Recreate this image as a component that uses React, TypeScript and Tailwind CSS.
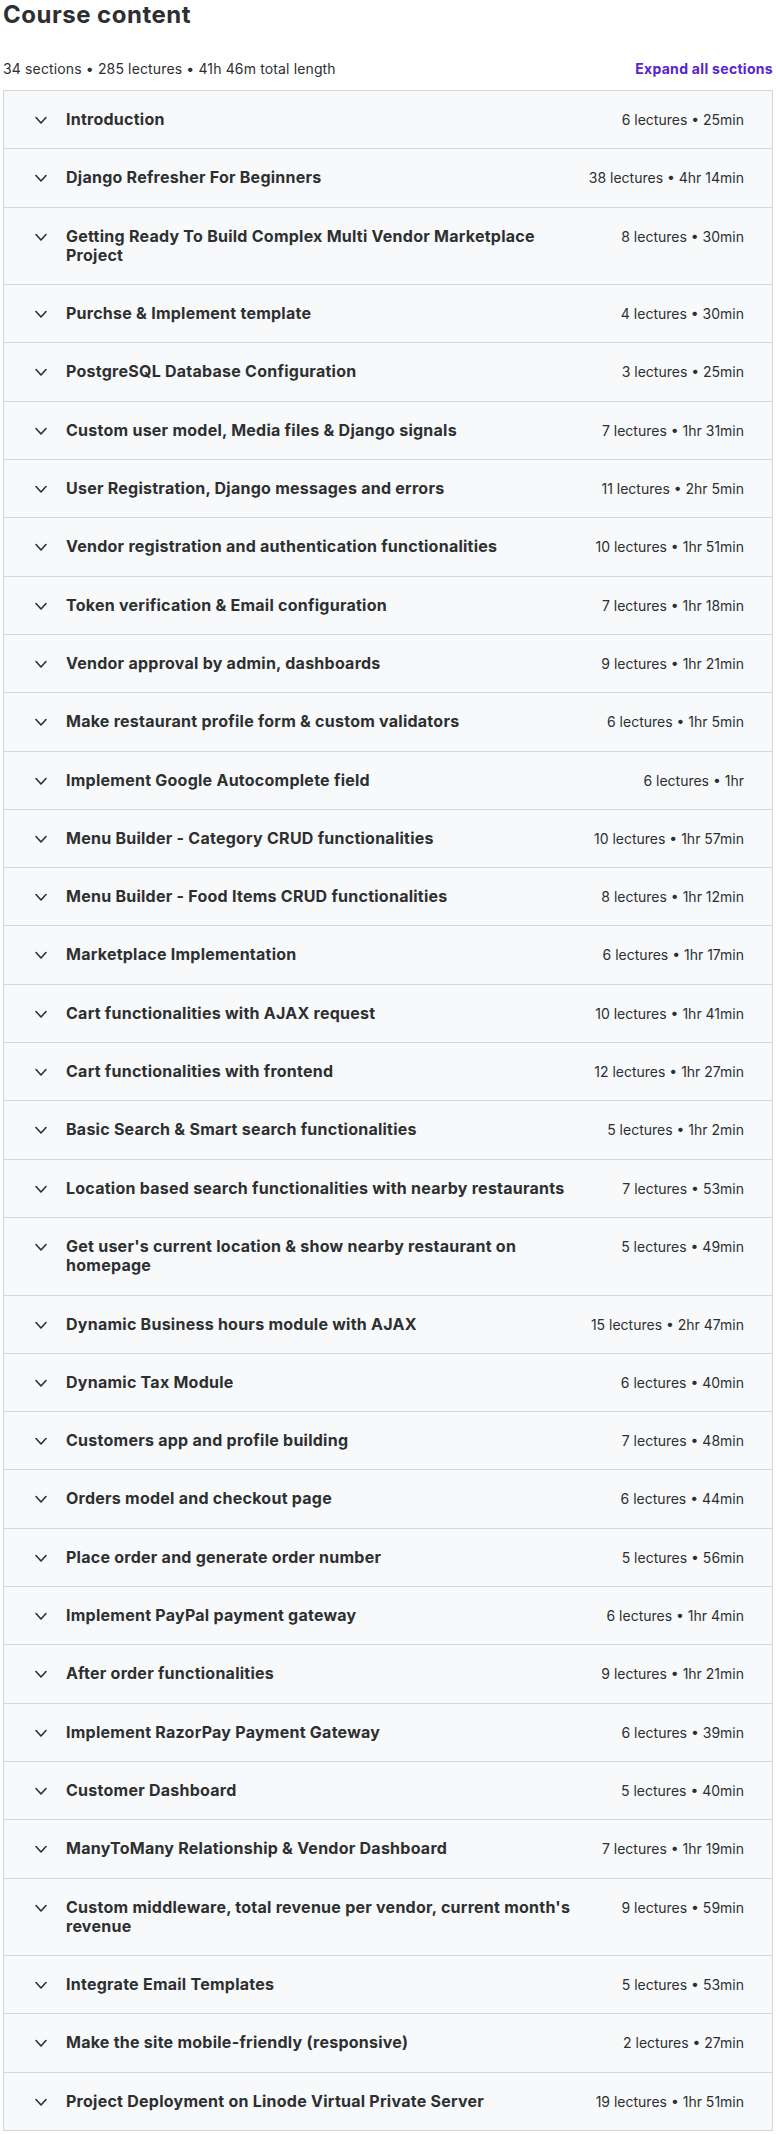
const sections: [string, string][] = [
  ['Introduction', '6 lectures • 25min'],
  ['Django Refresher For Beginners', '38 lectures • 4hr 14min'],
  ['Getting Ready To Build Complex Multi Vendor Marketplace Project', '8 lectures • 30min'],
  ['Purchse & Implement template', '4 lectures • 30min'],
  ['PostgreSQL Database Configuration', '3 lectures • 25min'],
  ['Custom user model, Media files & Django signals', '7 lectures • 1hr 31min'],
  ['User Registration, Django messages and errors', '11 lectures • 2hr 5min'],
  ['Vendor registration and authentication functionalities', '10 lectures • 1hr 51min'],
  ['Token verification & Email configuration', '7 lectures • 1hr 18min'],
  ['Vendor approval by admin, dashboards', '9 lectures • 1hr 21min'],
  ['Make restaurant profile form & custom validators', '6 lectures • 1hr 5min'],
  ['Implement Google Autocomplete field', '6 lectures • 1hr'],
  ['Menu Builder - Category CRUD functionalities', '10 lectures • 1hr 57min'],
  ['Menu Builder - Food Items CRUD functionalities', '8 lectures • 1hr 12min'],
  ['Marketplace Implementation', '6 lectures • 1hr 17min'],
  ['Cart functionalities with AJAX request', '10 lectures • 1hr 41min'],
  ['Cart functionalities with frontend', '12 lectures • 1hr 27min'],
  ['Basic Search & Smart search functionalities', '5 lectures • 1hr 2min'],
  ['Location based search functionalities with nearby restaurants', '7 lectures • 53min'],
  ["Get user's current location & show nearby restaurant on homepage", '5 lectures • 49min'],
  ['Dynamic Business hours module with AJAX', '15 lectures • 2hr 47min'],
  ['Dynamic Tax Module', '6 lectures • 40min'],
  ['Customers app and profile building', '7 lectures • 48min'],
  ['Orders model and checkout page', '6 lectures • 44min'],
  ['Place order and generate order number', '5 lectures • 56min'],
  ['Implement PayPal payment gateway', '6 lectures • 1hr 4min'],
  ['After order functionalities', '9 lectures • 1hr 21min'],
  ['Implement RazorPay Payment Gateway', '6 lectures • 39min'],
  ['Customer Dashboard', '5 lectures • 40min'],
  ['ManyToMany Relationship & Vendor Dashboard', '7 lectures • 1hr 19min'],
  ["Custom middleware, total revenue per vendor, current month's revenue", '9 lectures • 59min'],
  ['Integrate Email Templates', '5 lectures • 53min'],
  ['Make the site mobile-friendly (responsive)', '2 lectures • 27min'],
  ['Project Deployment on Linode Virtual Private Server', '19 lectures • 1hr 51min'],
]

function Chevron() {
  return (
    <svg width="16" height="16" viewBox="0 0 16 16" fill="none" className="shrink-0 mt-[2px]">
      <path d="M3 5.5l5 5.5 5-5.5" stroke="#2d2f31" strokeWidth="1.6" strokeLinecap="round" strokeLinejoin="round" />
    </svg>
  )
}

export default function App() {
  return (
    <div className="bg-white text-[#2d2f31] px-[3px] font-['Inter',sans-serif]">
      <h2 className="text-[24px] leading-[29px] font-bold tracking-[0.5px]">Course content</h2>

      <div className="flex items-center justify-between mt-[29px] mb-[12px] h-[20px]">
        <span className="text-[14px] tracking-[0.14px]">34 sections • 285 lectures • 41h 46m total length</span>
        <button className="text-[14px] font-bold text-[#5624d0] tracking-[0.3px]">Expand all sections</button>
      </div>

      <div className="border border-[#d1d7dc]">
        {sections.map(([title, meta], i) => (
          <div
            key={i}
            className={`flex items-start bg-[#f7f9fa] pl-[29px] pr-[28px] py-[19px] ${i < sections.length - 1 ? 'border-b border-[#d1d7dc]' : ''}`}
          >
            <Chevron />
            <div className="flex-1 ml-[17px] mr-[36px] text-[16px] leading-[19.3px] font-bold tracking-[0.25px]">{title}</div>
            <div className="shrink-0 text-[14px] leading-[19.3px]">{meta}</div>
          </div>
        ))}
      </div>
    </div>
  )
}
